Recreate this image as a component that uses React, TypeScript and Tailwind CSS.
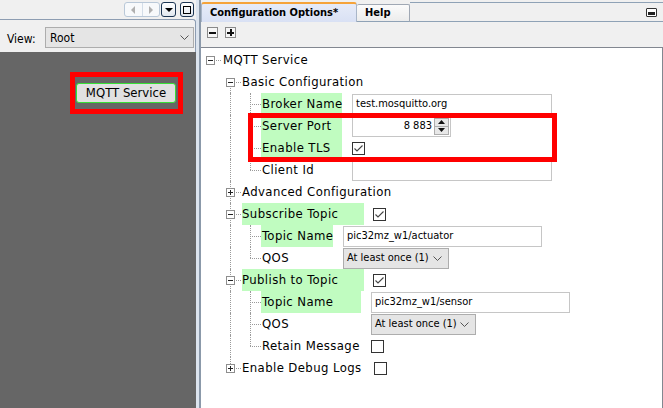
import type { ReactNode } from "react";

const FONT = "font-['DejaVu_Sans_Condensed','Liberation_Sans',sans-serif]";
const DOT = "border-dotted border-[#9a9a9a]";

function Expander({ kind }: { kind: "minus" | "plus" }) {
  return (
    <span className="absolute left-[5px] top-[7px] flex h-[9px] w-[9px] items-center justify-center border border-[#8e8e8e] bg-white">
      <span className="absolute h-[1px] w-[5px] bg-[#222]" />
      {kind === "plus" && <span className="absolute h-[5px] w-[1px] bg-[#222]" />}
    </span>
  );
}

function Cell({
  v,
  h,
  exp,
}: {
  v?: "full" | "top" | "bottom";
  h?: boolean;
  exp?: "minus" | "plus";
}) {
  return (
    <div className="relative h-[22px] w-[20px] shrink-0">
      {v === "full" && <span className={`absolute left-[9px] top-0 h-[22px] border-l ${DOT}`} />}
      {v === "top" && <span className={`absolute left-[9px] top-0 h-[11px] border-l ${DOT}`} />}
      {v === "bottom" && <span className={`absolute left-[9px] top-[11px] h-[11px] border-l ${DOT}`} />}
      {h && <span className={`absolute left-[9px] top-[11px] w-[11px] border-t ${DOT}`} />}
      {exp && <Expander kind={exp} />}
    </div>
  );
}

function Check({ on }: { on?: boolean }) {
  return (
    <span className="flex h-[13px] w-[13px] items-center justify-center border border-[#333] bg-white">
      {on && (
        <svg width="11" height="11" viewBox="0 0 11 11">
          <polyline points="1.5,5.5 4,8 9.5,2.5" fill="none" stroke="#444" strokeWidth="1.1" />
        </svg>
      )}
    </span>
  );
}

function Chevron() {
  return (
    <svg width="9" height="5" viewBox="0 0 9 5">
      <polyline points="0.5,0.5 4.5,4.5 8.5,0.5" fill="none" stroke="#555" strokeWidth="1" />
    </svg>
  );
}

function TextBox({ value, w }: { value: string; w: string }) {
  return (
    <div className={`flex h-[21px] items-center whitespace-nowrap border border-[#c6c6c6] bg-white px-[3px] text-[11px] text-black ${w}`}>
      {value}
    </div>
  );
}

function Select({ value, w }: { value: string; w: string }) {
  return (
    <div className={`flex h-[21px] items-center justify-between whitespace-nowrap border border-[#adadad] bg-[#e5e5e5] pl-[3px] pr-[6px] text-[11px] text-black ${w}`}>
      <span>{value}</span>
      <Chevron />
    </div>
  );
}

function Spinner({ value }: { value: string }) {
  return (
    <div className="flex h-[21px] w-[99px] items-stretch border border-[#c6c6c6] bg-white">
      <div className="flex flex-1 items-center justify-end pr-[2px] text-[11px] text-black">{value}</div>
      <div className="my-[1px] mr-[1px] flex w-[15px] flex-col border border-[#adadad] bg-[#e8e8e8]">
        <div className="flex flex-1 items-center justify-center border-b border-[#adadad]">
          <svg width="7" height="4" viewBox="0 0 7 4"><polygon points="0,4 3.5,0 7,4" fill="#111" /></svg>
        </div>
        <div className="flex flex-1 items-center justify-center">
          <svg width="7" height="4" viewBox="0 0 7 4"><polygon points="0,0 3.5,4 7,0" fill="#111" /></svg>
        </div>
      </div>
    </div>
  );
}

type Row = {
  depth: 0 | 1 | 2;
  label: string;
  exp?: "minus" | "plus";
  v1?: "full" | "top" | "bottom";
  v2?: "full" | "top";
  lw?: string;
  green?: boolean;
  ml?: string;
  control?: ReactNode;
};

const rows: Row[] = [
  { depth: 0, label: "MQTT Service", exp: "minus" },
  { depth: 1, label: "Basic Configuration", exp: "minus", v1: "bottom" },
  { depth: 2, label: "Broker Name", v2: "full", lw: "w-[81px]", green: true, ml: "ml-[10px]", control: <TextBox value="test.mosquitto.org" w="w-[200px]" /> },
  { depth: 2, label: "Server Port", v2: "full", lw: "w-[81px]", green: true, ml: "ml-[10px]", control: <Spinner value="8 883" /> },
  { depth: 2, label: "Enable TLS", v2: "full", lw: "w-[81px]", green: true, ml: "ml-[10px]", control: <Check on /> },
  { depth: 2, label: "Client Id", v2: "top", lw: "w-[81px]", ml: "ml-[10px]", control: <TextBox value="" w="w-[200px]" /> },
  { depth: 1, label: "Advanced Configuration", exp: "plus", v1: "full" },
  { depth: 1, label: "Subscribe Topic", exp: "minus", v1: "full", lw: "w-[122px]", green: true, ml: "ml-[9px]", control: <Check on /> },
  { depth: 2, label: "Topic Name", v2: "full", lw: "w-[72px]", green: true, ml: "ml-[10px]", control: <TextBox value="pic32mz_w1/actuator" w="w-[199px]" /> },
  { depth: 2, label: "QOS", v2: "top", lw: "w-[72px]", ml: "ml-[10px]", control: <Select value="At least once (1)" w="w-[106px]" /> },
  { depth: 1, label: "Publish to Topic", exp: "minus", v1: "full", lw: "w-[122px]", green: true, ml: "ml-[9px]", control: <Check on /> },
  { depth: 2, label: "Topic Name", v2: "full", lw: "w-[100px]", green: true, ml: "ml-[10px]", control: <TextBox value="pic32mz_w1/sensor" w="w-[199px]" /> },
  { depth: 2, label: "QOS", v2: "full", lw: "w-[100px]", ml: "ml-[10px]", control: <Select value="At least once (1)" w="w-[105px]" /> },
  { depth: 2, label: "Retain Message", v2: "top", lw: "w-[100px]", ml: "ml-[10px]", control: <Check /> },
  { depth: 1, label: "Enable Debug Logs", exp: "plus", v1: "top", lw: "w-[122px]", ml: "ml-[10px]", control: <Check /> },
];

function TreeRow({ r }: { r: Row }) {
  return (
    <div className="flex h-[22px] items-center">
      {r.depth === 0 ? <Cell h exp={r.exp} /> : <Cell />}
      {r.depth === 1 && <Cell v={r.v1} h exp={r.exp} />}
      {r.depth === 2 && (
        <>
          <Cell v="full" />
          <Cell v={r.v2} h />
        </>
      )}
      <div
        className={`flex h-[22px] shrink-0 items-center whitespace-nowrap text-[13px] tracking-[0.4px] text-black ${r.depth === 0 ? "ml-[2px]" : r.depth === 1 ? "ml-[1px]" : "pl-[1px]"} ${r.lw ?? ""} ${r.green ? "bg-[#c0fcc0]" : ""}`}
      >
        {r.label}
      </div>
      {r.control && <div className={`shrink-0 ${r.ml}`}>{r.control}</div>}
    </div>
  );
}

function Tri({ dir, color }: { dir: "l" | "r" | "d"; color: string }) {
  const pts = dir === "l" ? "5,0 5,8 1,4" : dir === "r" ? "1,0 1,8 5,4" : "0,1 8,1 4,5";
  return (
    <svg width={dir === "d" ? 8 : 6} height={dir === "d" ? 6 : 8} viewBox={dir === "d" ? "0 0 8 6" : "0 0 6 8"}>
      <polygon points={pts} fill={color} />
    </svg>
  );
}

export default function App() {
  return (
    <div className={`flex h-[408px] w-[663px] overflow-hidden bg-white ${FONT}`}>
      {/* left pane */}
      <div className="flex w-[196px] shrink-0 flex-col">
        <div className="flex h-[19px] items-center justify-end bg-[#f0f0f0] pr-[2px]">
          <div className="flex h-[15px] w-[36px] rounded-[3px] border border-[#b9c8d8] bg-[#f7f9fb]">
            <div className="flex flex-1 items-center justify-center border-r border-[#d3dde8]">
              <Tri dir="l" color="#b0b0b0" />
            </div>
            <div className="flex flex-1 items-center justify-center">
              <Tri dir="r" color="#b0b0b0" />
            </div>
          </div>
          <div className="ml-[1px] flex h-[15px] w-[15px] items-center justify-center rounded-[3px] border border-[#1c3553] bg-gradient-to-b from-[#ffffff] to-[#e2e8ef]">
            <Tri dir="d" color="#000" />
          </div>
          <div className="ml-[4px] flex h-[15px] w-[14px] items-center justify-center rounded-[3px] border border-[#1c3553] bg-gradient-to-b from-[#ffffff] to-[#e2e8ef]">
            <span className="h-[8px] w-[8px] border border-black" />
          </div>
        </div>
        <div className="flex h-[33px] items-start rounded-tr-[3px] border-r border-t border-[#8d9db2] bg-[#f0f0f0] pl-[7px] pt-[7px]">
          <span className="mt-[3px] w-[38px] text-[12px] text-black">View:</span>
          <div className="flex h-[21px] w-[149px] items-center justify-between border border-[#adadad] bg-[#e5e5e5] pl-[4px] pr-[4px] text-[12px] text-black">
            <span>Root</span>
            <Chevron />
          </div>
        </div>
        <div className="flex-1 bg-[#666666] pl-[70px] pt-[20px]">
          <div className="flex h-[42px] w-[113px] items-start border-[5px] border-[#ff0000] pl-[1px] pt-[6px]">
            <button className="flex h-[20px] w-[100px] items-center justify-center rounded-[3px] border border-[#36e036] bg-[#e1e1e1] text-[13px] text-black">
              MQTT Service
            </button>
          </div>
        </div>
      </div>

      {/* splitter */}
      <div className="w-[3px] shrink-0 bg-[#dce4ee]" />

      {/* right pane */}
      <div className="flex flex-1 flex-col border-l-2 border-[#8b99aa] bg-[#f0f0f0]">
        <div className="flex h-[22px] items-stretch pt-[2px]">
          <div className="flex w-[156px] items-center rounded-t-[3px] border-l border-r border-t-2 border-[#a9b6c8] border-t-[#f5a33a] bg-gradient-to-b from-[#e6ebf8] to-[#d9e1f4] pl-[8px] text-[11px] font-bold text-black">
            Configuration Options*
          </div>
          <div className="mt-[2px] flex w-[53px] items-center rounded-t-[2px] border-b border-r border-t border-[#a0a8b4] border-b-[#8fa2b6] bg-gradient-to-b from-[#fbfbfb] to-[#ececec] pl-[8px] text-[11px] font-bold text-black">
            Help
          </div>
          <div className="flex flex-1 items-center justify-end border-b border-t border-[#8fa2b6] pr-[6px]">
            <div className="flex h-[9px] w-[11px] items-end justify-center rounded-[1px] border border-[#333] bg-white pb-[1px]">
              <span className="h-[3px] w-[7px] bg-[#222]" />
            </div>
          </div>
        </div>
        <div className="flex h-[25px] items-start gap-[7px] pl-[6px] pt-[5px]">
          <span className="relative flex h-[11px] w-[11px] items-center justify-center border border-[#8a8a8a] bg-[#f6f6f6]">
            <span className="h-[2px] w-[7px] bg-[#111]" />
          </span>
          <span className="relative flex h-[11px] w-[11px] items-center justify-center border border-[#8a8a8a] bg-[#f6f6f6]">
            <span className="absolute h-[2px] w-[7px] bg-[#111]" />
            <span className="absolute h-[7px] w-[2px] bg-[#111]" />
          </span>
        </div>
        <div className="relative flex-1 border-r border-t border-[#828790] bg-white pt-[1px]">
          {rows.map((r, i) => (
            <TreeRow key={i} r={r} />
          ))}
          <div className="absolute left-[47px] top-[65px] h-[49px] w-[309px] border-[5px] border-[#ff0000]" />
        </div>
      </div>
    </div>
  );
}
